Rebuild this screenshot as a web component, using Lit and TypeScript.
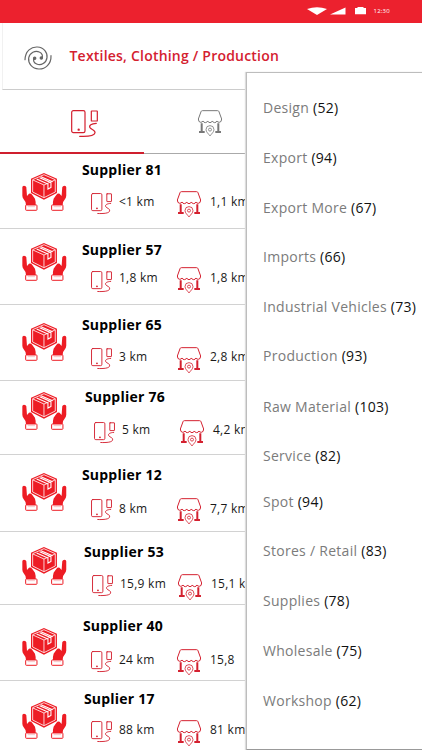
import { LitElement, html, css, svg } from "lit";
import { customElement } from "lit/decorators.js";
import { styleMap } from "lit/directives/style-map.js";

interface Supplier {
  name: string;
  courier: string;
  store: string;
  height: number;
  pic: number;
  title: number;
  dist: number;
  titleX: number;
  shift: number;
  phone: number;
}

// title / dist are baselines, pic is the picture's top, all from the row's top
const suppliers: Supplier[] = [
  { name: "Supplier 81", courier: "<1 km", store: "1,1 km", height: 75, pic: 19, title: 21, dist: 53.6, titleX: 82, shift: 0, phone: 0 },
  { name: "Supplier 57", courier: "1,8 km", store: "1,8 km", height: 75.5, pic: 14, title: 25.9, dist: 54, titleX: 82, shift: 0, phone: 3 },
  { name: "Supplier 65", courier: "3 km", store: "2,8 km", height: 76.5, pic: 18, title: 25.5, dist: 58.4, titleX: 82, shift: 0, phone: 0.5 },
  { name: "Supplier 76", courier: "5 km", store: "4,2 km", height: 74, pic: 11, title: 21.2, dist: 54.8, titleX: 85, shift: 3, phone: 1 },
  { name: "Supplier 12", courier: "8 km", store: "7,7 km", height: 76.5, pic: 18, title: 25.6, dist: 59, titleX: 82, shift: 0, phone: 0 },
  { name: "Supplier 53", courier: "15,9 km", store: "15,1 km", height: 73, pic: 15.7, title: 25.5, dist: 58.4, titleX: 84, shift: 1, phone: 0.5 },
  { name: "Supplier 40", courier: "24 km", store: "15,8", height: 76, pic: 23.5, title: 26.5, dist: 61.2, titleX: 83, shift: 0, phone: 0 },
  { name: "Suplier 17", courier: "88 km", store: "81 km", height: 76, pic: 20.5, title: 23.8, dist: 55.4, titleX: 84, shift: 0, phone: 0.5 },
];

const categories: [string, number, number][] = [
  ["Design", 52, 50],
  ["Export", 94, 50.3],
  ["Export More", 67, 49.4],
  ["Imports", 66, 49.6],
  ["Industrial Vehicles", 73, 49.6],
  ["Production", 93, 50.7],
  ["Raw Material", 103, 49],
  ["Service", 82, 45.7],
  ["Spot", 94, 49],
  ["Stores / Retail", 83, 50.5],
  ["Supplies", 78, 49.7],
  ["Wholesale", 75, 49.6],
  ["Workshop", 62, 40],
];

const phoneIcon = html`<svg class="phone" viewBox="0 0 81 82">${svg`
  <g fill="none" stroke="currentColor" stroke-width="3.6" stroke-linecap="round">
    <rect x="2" y="2" width="40" height="66" rx="5"/>
    <rect x="61" y="3" width="18" height="30" rx="1"/>
    <path d="M76 40C61 41 53 46 57 53C61 59 74 60 72 69C70 78 50 80 26 79"/>
  </g><circle cx="23" cy="59" r="3.500" fill="currentColor"/>`}</svg>`;

const storeIcon = html`<svg class="store" viewBox="0 0 72 80">${svg`
  <g fill="none" stroke="currentColor" stroke-width="3" stroke-linejoin="round">
    <path d="M13 2H59Q62 2 63 5L71 27Q71 37 64 37Q58 37 57 33Q55 38 50 38Q45 38 43 33Q41 38 36 38Q31 38 29 33Q27 38 22 38Q17 38 15 33Q13 37 8 37Q1 37 1 27L9 5Q10 2 13 2Z"/>
    <path stroke-width="2.4" d="M36 78C31 71 24 66 24 59A12 12 0 0 1 48 59C48 66 41 71 36 78Z"/>
    <circle stroke-width="2.4" cx="36" cy="59" r="4.500"/>
  </g>
  <path fill="currentColor" d="M8 40H14V63H20V69H3V63H8ZM58 40H64V63H69V69H52V63H58Z"/>`}</svg>`;

const boxIcon = html`<svg class="box" viewBox="0 0 134 114">${svg`
  <g fill="#ed1c24">
    <path d="M1 43Q1 38 6 38Q12 38 13 43L15 69L21 62Q27 60 31 66L39 77Q42 87 41 96H12Q13 87 6 80Q1 74 1 68Z"/>
    <path d="M133 43Q133 38 128 38Q122 38 121 43L119 69L113 62Q107 60 103 66L95 77Q92 87 93 96H122Q121 87 128 80Q133 74 133 68Z"/>
    <path d="M66 0L105 17V60L66 80L27 60V17Z"/>
  </g>
  <g fill="none" stroke="#fff" stroke-width="2.4">
    <path d="M66 5L100 20V57L66 74L32 57V20Z"/>
    <path d="M33 21L66 36L99 21M66 36V73"/>
    <path stroke-width="3.200" d="M44 18L78 33V48L87 43V29L53 14M57 11L92 26"/>
  </g>
  <g fill="#fff" stroke="#ed1c24" stroke-width="3">
    <rect x="11" y="96" width="34" height="16" rx="2"/>
    <rect x="89" y="96" width="34" height="16" rx="2"/>
  </g>
  <path stroke="#f7a6a9" stroke-width="2" d="M17 101H39M95 101H117"/>`}</svg>`;

@customElement("app-root")
export class AppRoot extends LitElement {
  static styles = css`
    :host {
      display: block;
      position: relative;
      width: 422px;
      height: 750px;
      overflow: hidden;
      background: #fff;
      color: #111;
      font-family: "Open Sans", "Noto Sans", sans-serif;
      white-space: nowrap;
    }
    * { box-sizing: border-box; }
    svg { display: block; flex: none; overflow: visible; }
    .status {
      display: flex;
      align-items: center;
      height: 22.5px;
      padding-left: 307px;
      background: #ec212e;
      color: #fff;
      font-size: 6px;
      letter-spacing: 0.2px;
    }
    .signals { width: 59px; height: 22px; }
    .clock { margin-left: 7.5px; line-height: 20px; }
    .header {
      display: flex;
      align-items: center;
      height: 67.5px;
      margin-left: 1.5px;
      padding: 0 0 2px 21px;
      border-left: 1px solid #f1f1f1;
      border-bottom: 1.5px solid #ccc;
    }
    .swirl { width: 28px; height: 24px; margin-top: 6.5px; }
    .heading {
      margin: 3px 0 0 18px;
      color: #d4202f;
      font-size: 14px;
      font-weight: 600;
      line-height: 20px;
      letter-spacing: 0.21px;
    }
    .tabs { display: flex; height: 64px; }
    .tab {
      display: flex;
      justify-content: center;
      width: 144px;
      padding: 19.5px 0 0 24px;
      border-bottom: 2px solid #cf1f2e;
      color: #d4202f;
    }
    .tab.idle {
      width: 278px;
      justify-content: flex-start;
      padding: 20px 0 0 54px;
      border-bottom: 1.5px solid #aaa;
      color: #777;
    }
    .phone { width: 21px; height: 21.3px; }
    .tab .phone { width: 27px; height: 27.3px; }
    .store { width: 24px; height: 26.6px; }
    .row {
      display: flex;
      height: var(--h);
      padding-left: 22px;
      border-bottom: 1.3px solid #d2d2d2;
    }
    .box { width: 44.6px; height: 38px; margin-top: var(--pic); }
    .body { flex: 1; padding-top: var(--title); }
    .name {
      height: 20px;
      margin: 0 0 var(--gap) var(--tx);
      color: #000;
      font-size: 14px;
      font-weight: 700;
      line-height: 20px;
      letter-spacing: 0.23px;
    }
    .metrics {
      display: flex;
      align-items: flex-start;
      height: 20px;
      padding-left: var(--mx);
      color: #d4202f;
    }
    .metrics .phone { margin-top: var(--phone); }
    .metrics .store { margin-top: -0.9px; }
    .km {
      width: 65px;
      padding-left: 7.3px;
      color: #1a1a1a;
      font-size: 12px;
      line-height: 20px;
      letter-spacing: 0.28px;
    }
    .km.far { padding-left: 9.3px; }
    .menu {
      position: absolute;
      left: 246px;
      top: 72px;
      width: 177px;
      height: 677.5px;
      padding: 24.5px 0 0 16px;
      background: #fff;
      border: 1px solid #bdbdbd;
      border-bottom-color: #999;
      box-shadow: -1px 0 1px #ddd;
    }
    .item {
      height: var(--h);
      color: #111;
      font-size: 14px;
      line-height: 20px;
      letter-spacing: 0.28px;
    }
    .label { color: #7b7b7b; }
  `;

  private row(s: Supplier) {
    const vars = {
      "--h": `${s.height}px`,
      "--pic": `${s.pic}px`,
      "--title": `${s.title - 15.4}px`,
      "--gap": `${s.dist - s.title - 20}px`,
      "--tx": `${s.titleX - 66.7}px`,
      "--mx": `${s.shift + 24}px`,
      "--phone": `${s.phone + 0.4}px`,
    };
    return html`<div class="row" style=${styleMap(vars)}>
      ${boxIcon}
      <div class="body">
        <div class="name">${s.name}</div>
        <div class="metrics">
          ${phoneIcon}<span class="km">${s.courier}</span>
          ${storeIcon}<span class="km far">${s.store}</span>
        </div>
      </div>
    </div>`;
  }

  render() {
    return html`
      <div class="status">
        <svg class="signals" viewBox="0 0 59 22" fill="#fff">
          <path d="M0 9Q10 5.500 20 9L10 15ZM23 14.500L38.500 7.500V14.500ZM48 8H50.500V7H56.500V8H59V14.300H48Z"/>
        </svg>
        <span class="clock">12:30</span>
      </div>
      <div class="header">
        <svg class="swirl" viewBox="0 0 84 72" fill="none" stroke="#666" stroke-width="3.6" stroke-linecap="round">
          <path d="M3 41C4 14 22 2 40 3C60 4 71 20 69 35C67 51 51 60 38 54C29 50 27 43 30 37"/>
          <path d="M81 29C82 54 64 70 44 69C24 68 12 52 14 36C17 20 34 12 46 18C55 22 57 30 54 35"/>
          <circle cx="32" cy="37" r="3.500" fill="#666"/>
          <circle cx="52" cy="36" r="3.500" fill="#666"/>
        </svg>
        <div class="heading">Textiles, Clothing / Production</div>
      </div>
      <div class="tabs">
        <div class="tab">${phoneIcon}</div>
        <div class="tab idle">${storeIcon}</div>
      </div>
      ${suppliers.map((s) => this.row(s))}
      <div class="menu">
        ${categories.map(
          ([label, count, h]) => html`<div class="item" style=${styleMap({ "--h": `${h}px` })}>
            <span class="label">${label}</span> (${count})
          </div>`
        )}
      </div>
    `;
  }
}
